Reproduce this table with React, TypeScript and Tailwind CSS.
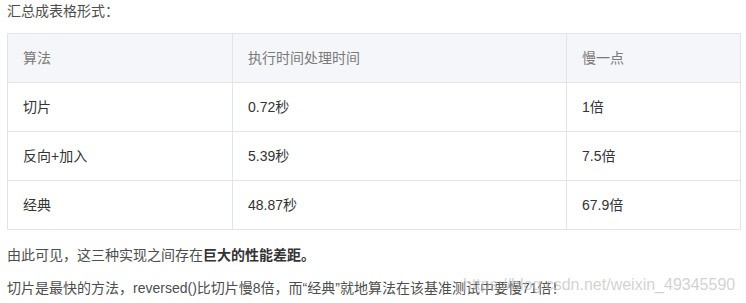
import React from "react";

const rows = [
  ["切片", "0.72秒", "1倍"],
  ["反向+加入", "5.39秒", "7.5倍"],
  ["经典", "48.87秒", "67.9倍"],
];

const widths = ["w-[225px]", "w-[334px]", "w-[174px]"];

export default function App() {
  return (
    <div
      className="relative w-[746px] h-[303px] bg-white px-[7px] text-[14px] text-[#4d4d4d] overflow-hidden"
      style={{ fontFamily: '"Liberation Sans", "Noto Sans CJK SC", sans-serif' }}
    >
      <p className="leading-[22px]">汇总成表格形式：</p>
      <div className="mt-[11px] w-[734px] border-l border-t border-[#e2e4ec]">
        <div className="flex bg-[#f5f6f9] text-[#7a7a7a]">
          {["算法", "执行时间处理时间", "慢一点"].map((h, i) => (
            <div
              key={i}
              className={`${widths[i]} h-[49px] flex items-center pl-[15px] border-r border-b border-[#e2e4ec]`}
            >
              {h}
            </div>
          ))}
        </div>
        {rows.map((r, ri) => (
          <div key={ri} className="flex">
            {r.map((c, i) => (
              <div
                key={i}
                className={`${widths[i]} h-[49px] flex items-center pl-[15px] border-r border-b border-[#e2e4ec] text-[#333]`}
              >
                {c}
              </div>
            ))}
          </div>
        ))}
      </div>
      <p className="mt-[14px] leading-[22px]">
        由此可见，这三种实现之间存在<b className="font-bold text-[#333]">巨大的性能差距。</b>
      </p>
      <p className="mt-[11px] leading-[22px]">
        切片是最快的方法，reversed()比切片慢8倍，而“经典”就地算法在该基准测试中要慢71倍！
      </p>
      <div
        className="absolute left-[463px] top-[276px] text-[16px] leading-[18px] text-[rgba(190,190,190,0.7)] whitespace-nowrap"
        style={{ fontFamily: '"Liberation Sans", sans-serif' }}
      >
        https://blog.csdn.net/weixin_49345590
      </div>
    </div>
  );
}
